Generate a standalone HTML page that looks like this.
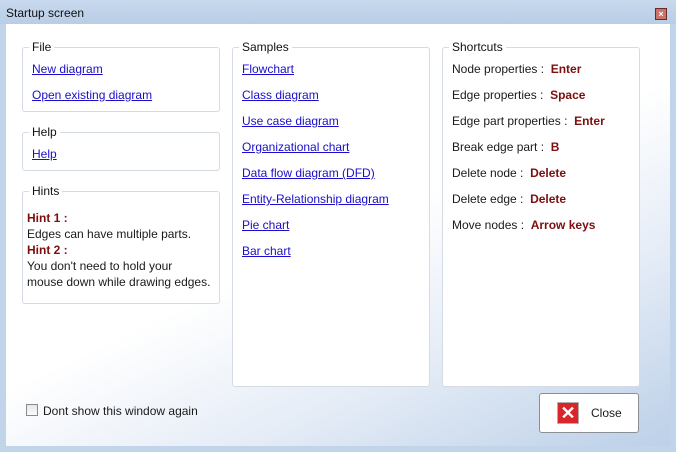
<!DOCTYPE html>
<html><head><style>
*{margin:0;padding:0;box-sizing:border-box}
body{width:676px;height:452px;overflow:hidden;background:#c2d4ea;font-family:"Liberation Sans",sans-serif;font-size:12px;color:#1a1a1a;position:relative}
.title{position:absolute;left:0;top:0;width:676px;height:24px;background:linear-gradient(#c9d9ee,#b9cde6)}
.title span{position:absolute;left:6px;top:6px;font-size:12px;color:#111}
.x{position:absolute;left:655px;top:8px;width:12px;height:12px;background:#c9736a;border:1px solid #6b2a24;color:#fff;font-size:9px;line-height:10px;text-align:center;font-weight:bold}
.main{position:absolute;left:6px;top:24px;width:664px;height:422px;background:linear-gradient(155deg,#fff 0%,#fff 50%,#e6edf7 72%,#bcd0e8 100%)}
.box{position:absolute;border:1px solid #d5dbe3;border-radius:3px;background:#fff}
.lg{position:absolute;top:-8px;left:6px;background:#fff;padding:0 3px;font-size:12px;color:#111}
.t{position:absolute;white-space:nowrap}
a{color:#1a0dcc;text-decoration:underline}
.k{color:#7b1010;font-weight:bold}
</style></head><body>
<div class="title"><span>Startup screen</span><div class="x">×</div></div>
<div class="main"></div>
<div class="box" style="left:22px;top:47px;width:198px;height:65px"><div class="lg">File</div></div>
<div class="t" style="left:32px;top:62px"><a>New diagram</a></div>
<div class="t" style="left:32px;top:88px"><a>Open existing diagram</a></div>
<div class="box" style="left:22px;top:132px;width:198px;height:39px"><div class="lg">Help</div></div>
<div class="t" style="left:32px;top:147px"><a>Help</a></div>
<div class="box" style="left:22px;top:191px;width:198px;height:113px"><div class="lg">Hints</div></div>
<div class="t" style="left:27px;top:210px;line-height:16px"><span class="k">Hint 1 :</span><br>Edges can have multiple parts.<br><span class="k">Hint 2 :</span><br>You don't need to hold your<br>mouse down while drawing edges.</div>
<div class="box" style="left:232px;top:47px;width:198px;height:340px"><div class="lg">Samples</div></div>
<div class="t" style="left:242px;top:56px;line-height:26px"><a>Flowchart</a><br><a>Class diagram</a><br><a>Use case diagram</a><br><a>Organizational chart</a><br><a>Data flow diagram (DFD)</a><br><a>Entity-Relationship diagram</a><br><a>Pie chart</a><br><a>Bar chart</a></div>
<div class="box" style="left:442px;top:47px;width:198px;height:340px"><div class="lg">Shortcuts</div></div>
<div class="t" style="left:452px;top:56px;line-height:26px">Node properties : &nbsp;<span class="k">Enter</span><br>Edge properties : &nbsp;<span class="k">Space</span><br>Edge part properties : &nbsp;<span class="k">Enter</span><br>Break edge part : &nbsp;<span class="k">B</span><br>Delete node : &nbsp;<span class="k">Delete</span><br>Delete edge : &nbsp;<span class="k">Delete</span><br>Move nodes : &nbsp;<span class="k">Arrow keys</span></div>
<div style="position:absolute;left:26px;top:404px;width:12px;height:12px;border:1px solid #8a8a8a;background:linear-gradient(#e8e8e8,#fafafa)"></div>
<div class="t" style="left:43px;top:404px;font-size:12px">Dont show this window again</div>
<div style="position:absolute;left:539px;top:393px;width:100px;height:40px;border:1px solid #8a8f96;border-radius:3px;background:#fff"></div>
<div style="position:absolute;left:557px;top:402px;width:22px;height:22px;background:#d8262a;border:1px solid #b0b0b0;color:#fff;font-weight:bold;font-size:18px;line-height:20px;text-align:center">✕</div>
<div class="t" style="left:591px;top:406px;font-size:12px">Close</div>
</body></html>
